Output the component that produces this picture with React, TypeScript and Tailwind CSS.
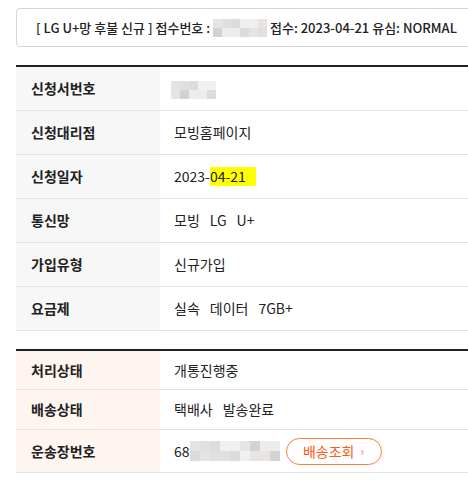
import React from "react";

const font = { fontFamily: '"Noto Sans CJK KR", "Noto Sans", sans-serif' };

// fake mosaic blur blocks
function Mosaic({ cols, rows, cell, shades }: { cols: number; rows: number; cell: number; shades: string[] }) {
  return (
    <span className="inline-grid align-middle" style={{ gridTemplateColumns: `repeat(${cols}, ${cell}px)` }}>
      {Array.from({ length: cols * rows }).map((_, i) => (
        <span key={i} style={{ height: cell, background: shades[(i * 7 + (i >> 2)) % shades.length] }} />
      ))}
    </span>
  );
}

const shades = ["#e4e4e4", "#dcdcdc", "#ececec", "#d2d2d4", "#e8e4e2", "#f0f0f0", "#dadde0", "#e0e0e0"];

function Words({ items }: { items: string[] }) {
  return (
    <span className="flex">
      {items.map((w, i) => (
        <span key={w} className={i ? "ml-[10px]" : ""}>
          {w}
        </span>
      ))}
    </span>
  );
}

type Row = { label: string; value: React.ReactNode };

const rows1: Row[] = [
  { label: "신청서번호", value: <span className="-ml-[3px]"><Mosaic cols={5} rows={2} cell={9} shades={shades} /></span> },
  { label: "신청대리점", value: "모빙홈페이지" },
  {
    label: "신청일자",
    value: (
      <>
        2023-<span className="bg-[#ffff00] pr-[10px] leading-[19px]">04-21</span>
      </>
    ),
  },
  { label: "통신망", value: <Words items={["모빙", "LG", "U+"]} /> },
  { label: "가입유형", value: "신규가입" },
  { label: "요금제", value: <Words items={["실속", "데이터", "7GB+"]} /> },
];

const rows2: Row[] = [
  { label: "처리상태", value: "개통진행중" },
  { label: "배송상태", value: <Words items={["택배사", "발송완료"]} /> },
  {
    label: "운송장번호",
    value: (
      <div className="flex items-center">
        <span>68</span>
        <Mosaic cols={9} rows={2} cell={10} shades={shades} />
        <button className="ml-[6px] h-[27px] w-[96px] rounded-full border border-[#ff7a3d] text-[14px] text-[#ff5a14] flex items-center justify-center gap-[6px]">
          배송조회<span className="text-[12px] text-[#ff7a3d]">›</span>
        </button>
      </div>
    ),
  },
];

function Table({ rows, labelBg, rowH }: { rows: Row[]; labelBg: string; rowH: number[] }) {
  return (
    <div className="ml-4 border-t-2 border-[#222]">
      {rows.map((r, i) => (
        <div key={r.label} className="flex border-b border-[#e3e3e3]" style={{ height: rowH[i] }}>
          <div className={`w-[144px] shrink-0 ${labelBg} flex items-center pl-[15px] text-[14px] font-bold text-[#222]`}>
            {r.label}
          </div>
          <div className="flex items-center pl-[14px] text-[14px] text-[#222]">{r.value}</div>
        </div>
      ))}
    </div>
  );
}

export default function App() {
  return (
    <div className="w-[468px] h-[491px] bg-white overflow-hidden pt-2" style={font}>
      <div className="ml-4 w-[480px] h-[39px] border border-[#d6d6d6] rounded-[4px] flex items-center pl-[19px] text-[13px] font-medium text-[#222] whitespace-nowrap">
        <span className="whitespace-pre">[ LG U+망 후불 신규 ] 접수번호 : </span>
        <Mosaic cols={6} rows={2} cell={9} shades={shades} />
        <span className="whitespace-pre"> 접수: 2023-04-21 유심: NORMAL</span>
      </div>
      <div className="mt-[18px]">
        <Table rows={rows1} labelBg="bg-[#f7f7f7]" rowH={[44, 44, 44, 44, 44, 44]} />
      </div>
      <div className="mt-[18px]">
        <Table rows={rows2} labelBg="bg-[#fff5f0]" rowH={[39, 40, 43]} />
      </div>
    </div>
  );
}
